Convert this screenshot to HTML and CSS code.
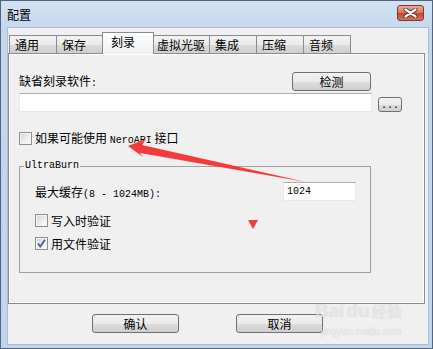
FILE: index.html
```html
<!DOCTYPE html>
<html lang="zh">
<head>
    <meta charset="UTF-8">
    <title>配置</title>
    <link rel="stylesheet" href="styles.css">
</head>
<body>

<div class="window">
    <div class="titlebar">
        <span class="title">配置</span>
        <button class="close-btn">
            <svg width="15" height="10" viewBox="0 0 15 10">
                <path d="M2.5 1.5 L12.5 8.5 M12.5 1.5 L2.5 8.5" stroke="#5b2b25" stroke-width="4" stroke-linecap="round"/>
                <path d="M2.5 1.5 L12.5 8.5 M12.5 1.5 L2.5 8.5" stroke="#fff" stroke-width="2.2" stroke-linecap="round"/>
            </svg>
        </button>
    </div>

    <div class="client">
        <div class="tabs">
            <div class="tab">通用</div>
            <div class="tab">保存</div>
            <div class="tab active">刻录</div>
            <div class="tab">虚拟光驱</div>
            <div class="tab">集成</div>
            <div class="tab">压缩</div>
            <div class="tab">音频</div>
        </div>

        <div class="panel">
            <div class="row-top">
                <span class="label">缺省刻录软件<span class="lat">:</span></span>
                <button class="btn btn-detect">检测</button>
            </div>
            <div class="row-path">
                <input type="text" class="field field-path">
                <button class="btn btn-dots"><span class="lat">...</span></button>
            </div>
            <div class="check-row check-nero">
                <span class="checkbox"></span>
                <span>如果可能使用 <span class="lat">NeroAPI</span> 接口</span>
            </div>

            <div class="group">
                <div class="group-title lat">UltraBurn</div>
                <div class="row-cache">
                    <span>最大缓存<span class="lat">(8 - 1024MB):</span></span>
                    <input type="text" class="field field-cache lat" value="1024">
                </div>
                <div class="check-row check-write">
                    <span class="checkbox"></span>
                    <span>写入时验证</span>
                </div>
                <div class="check-row check-file">
                    <span class="checkbox checked">
                        <svg width="11" height="11" viewBox="0 0 11 11">
                            <path d="M2 5.5 L4.3 8.5 L9 1.8" fill="none" stroke="#4a5d9a" stroke-width="1.8"/>
                        </svg>
                    </span>
                    <span>用文件验证</span>
                </div>
            </div>
        </div>

        <div class="buttons">
            <button class="btn btn-main">确认</button>
            <button class="btn btn-main">取消</button>
        </div>
    </div>

    <div class="watermark">
        <div class="wm-logo">Bai<span class="wm-du">du</span><span class="wm-cn">经验</span></div>
        <div class="wm-url">jingyan.baidu.com</div>
    </div>

    <svg class="marks" width="433" height="349" viewBox="0 0 433 349">
        <polygon points="128,146 146,139 142,145 306,182 140,153 143,157" fill="#f53a3a"/>
        <polygon points="248,220 258,220 253,229" fill="#f53a3a"/>
    </svg>
</div>

</body>
</html>
```

FILE: styles.css
```css
body {
    margin: 0;
    font-family: "Noto Sans CJK SC", "Liberation Sans", sans-serif;
    font-size: 12px;
    color: #000;
}
.window {
    position: relative;
    width: 433px;
    height: 349px;
    box-sizing: border-box;
    border: 1px solid #52657d;
    background: linear-gradient(#d3e2f3, #c3d7ec 30px, #bfd5ec);
    display: flex;
    flex-direction: column;
}
.titlebar {
    height: 27px;
    display: flex;
    align-items: center;
    padding-left: 6px;
}
.title {
    flex: 1;
    font-size: 12px;
    line-height: 14px;
}
.close-btn {
    align-self: flex-start;
    margin: 4px 8px 0 0;
    width: 27px;
    height: 16px;
    padding: 0;
    border: 1px solid #7a3a30;
    border-radius: 3px;
    background: linear-gradient(#e9a99b, #d8755f 50%, #c4442b 51%, #d5735a);
    display: flex;
    align-items: center;
    justify-content: center;
}
.client {
    height: 316px;
    margin: 0 4px 0 7px;
    background: #f0f0f0;
    padding-top: 4px;
    box-sizing: border-box;
    box-shadow: 0 0 0 1px #a9bdd4;
}

/* tabs */
.tabs {
    display: flex;
    align-items: flex-end;
    height: 21px;
    padding-left: 1px;
}
.tab {
    height: 18px;
    min-width: 48px;
    box-sizing: border-box;
    padding: 2px 4px 0 5px;
    border: 1px solid #898c95;
    border-bottom: none;
    background: linear-gradient(#f3f3f3, #ebebeb 50%, #dcdcdc 51%, #cfcfcf);
    line-height: 14px;
}
.tab + .tab {
    border-left: none;
    min-width: 47px;
}
.tab.active {
    position: relative;
    z-index: 1;
    height: 22px;
    min-width: 52px;
    margin: 0 -2px -1px -2px;
    padding: 2px 4px 0 8px;
    border-left: 1px solid #898c95;
    background: linear-gradient(#ffffff, #f6f6f6 60%, #f0f0f0);
}

/* panel */
.panel {
    width: 417px;
    height: 251px;
    box-sizing: border-box;
    border: 1px solid #898c95;
    box-shadow: inset 0 0 0 1px #fff;
    padding: 18px 0 0 10px;
}
.lat {
    font-family: "Liberation Mono", monospace;
    font-size: 10px;
}
.row-top {
    width: 352px;
    height: 19px;
    display: flex;
    justify-content: space-between;
    align-items: flex-end;
}
.label {
    line-height: 14px;
}
.row-path {
    margin-top: 2px;
    display: flex;
    align-items: flex-end;
    gap: 6px;
}
.field {
    box-sizing: border-box;
    height: 19px;
    border: 1px solid #e3e9ef;
    border-top-color: #abadb3;
    background: #fff;
    padding: 0 3px;
    margin: 0;
    outline: none;
}
.field-path {
    width: 353px;
}
.btn {
    box-sizing: border-box;
    border: 1px solid #707070;
    border-radius: 3px;
    background: linear-gradient(#f2f2f2, #ebebeb 50%, #dddddd 51%, #cfcfcf);
    font-family: "Noto Sans CJK SC", sans-serif;
    font-size: 12px;
    padding: 0;
    line-height: 14px;
    color: #000;
}
.btn-detect {
    width: 79px;
    height: 19px;
}
.btn-dots {
    width: 24px;
    height: 15px;
    line-height: 10px;
}
.check-row {
    display: flex;
    align-items: center;
    gap: 3px;
    height: 13px;
    line-height: 13px;
}
.check-nero {
    margin-top: 20px;
}
.checkbox {
    width: 13px;
    height: 13px;
    box-sizing: border-box;
    border: 1px solid #8e8f8f;
    background: linear-gradient(135deg, #d4d4d4, #f4f4f4 70%, #fbfbfb);
    box-shadow: inset 0 0 0 1px #f4f4f4;
    display: flex;
    align-items: center;
    justify-content: center;
}

/* UltraBurn group */
.group {
    margin-top: 21px;
    width: 352px;
    height: 107px;
    box-sizing: border-box;
    border: 1px solid #a0a0a0;
    padding: 0 14px 0 15px;
}
.group-title {
    display: table;
    margin: -7px 0 0 -11px;
    padding: 0 1px;
    background: #f0f0f0;
    line-height: 12px;
}
.row-cache {
    margin-top: 10px;
    height: 19px;
    display: flex;
    justify-content: space-between;
    align-items: center;
}
.field-cache {
    width: 73px;
    font-size: 10px;
}
.check-write {
    margin-top: 13px;
}
.check-file {
    margin-top: 10px;
}

/* bottom buttons */
.buttons {
    display: flex;
    gap: 57px;
    padding: 10px 0 0 84px;
}
.btn-main {
    width: 87px;
    height: 19px;
}

/* overlays */
.watermark {
    position: absolute;
    left: 314px;
    top: 299px;
    color: rgba(255, 255, 255, 0.5);
    text-shadow: 0 0 1px rgba(150, 150, 150, 0.45);
    pointer-events: none;
}
.wm-logo {
    font-family: "Liberation Sans", sans-serif;
    font-weight: bold;
    font-size: 19px;
    line-height: 22px;
}
.wm-du {
    margin-left: 2px;
}
.wm-cn {
    font-family: "Noto Sans CJK SC", sans-serif;
    font-size: 15px;
    margin-left: 2px;
}
.wm-url {
    font-family: "Liberation Sans", sans-serif;
    font-size: 10px;
    margin: 4px 0 0 6px;
}
.marks {
    position: absolute;
    left: -1px;
    top: -1px;
    pointer-events: none;
}
```
